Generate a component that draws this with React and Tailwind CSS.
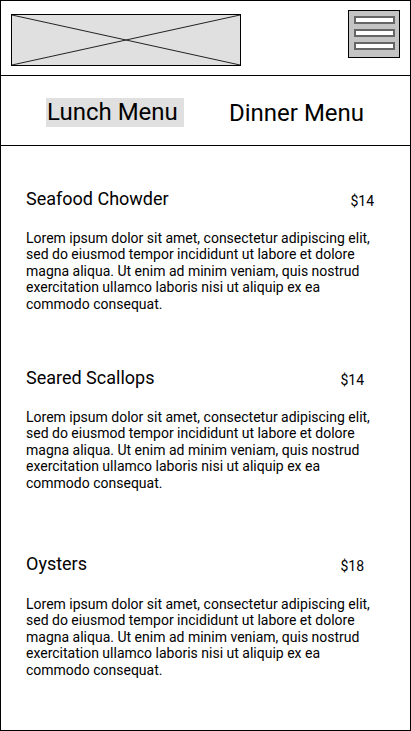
import React from 'react';

const lorem =
  'Lorem ipsum dolor sit amet, consectetur adipiscing elit, sed do eiusmod tempor incididunt ut labore et dolore magna aliqua. Ut enim ad minim veniam, quis nostrud exercitation ullamco laboris nisi ut aliquip ex ea commodo consequat.';

const items = [
  { name: 'Seafood Chowder', price: '$14', top: 'mt-[41px]', gap: 'mt-[19px]', pr: 'pr-[36px]' },
  { name: 'Seared Scallops', price: '$14', top: 'mt-[54px]', gap: 'mt-[19px]', pr: 'pr-[46px]' },
  { name: 'Oysters', price: '$18', top: 'mt-[61px]', gap: 'mt-[20px]', pr: 'pr-[46px]' },
];

const LogoPlaceholder = () => (
  <div className="w-[230px] h-[52px] border border-black bg-[#e0e0e0]">
    <svg width="228" height="50" viewBox="0 0 228 50" className="block">
      <line x1="0" y1="0" x2="228" y2="50" stroke="#222" strokeWidth="1" />
      <line x1="0" y1="50" x2="228" y2="0" stroke="#222" strokeWidth="1" />
    </svg>
  </div>
);

const MenuButton = () => (
  <div className="w-[52px] h-[48px] border border-black bg-[#c4c4c4] flex flex-col items-center pt-[5px] gap-[5px]">
    <div className="w-[41px] h-[8px] border-2 border-[#666] bg-white" />
    <div className="w-[41px] h-[8px] border-2 border-[#666] bg-white" />
    <div className="w-[41px] h-[8px] border-2 border-[#666] bg-white" />
  </div>
);

const MenuItem = ({ item }) => (
  <div className={item.top}>
    <div className={`flex items-center justify-between h-[24px] ${item.pr}`}>
      <h2 className="text-[18px] leading-[24px] font-normal">{item.name}</h2>
      <span className="text-[14px] leading-[24px] pt-[3px]">{item.price}</span>
    </div>
    <p className={`${item.gap} text-[14px] leading-[16.4px] pr-[30px]`}>{lorem}</p>
  </div>
);

export default function App() {
  return (
    <div
      className="w-[411px] h-[731px] border border-black bg-white text-black overflow-hidden"
      style={{ fontFamily: 'Roboto, "Liberation Sans", sans-serif' }}
    >
      <header className="h-[75px] border-b border-black flex items-start justify-between pl-[10px] pr-[10px]">
        <div className="mt-[13px]">
          <LogoPlaceholder />
        </div>
        <div className="mt-[9px]">
          <MenuButton />
        </div>
      </header>

      <nav className="h-[70px] border-b border-black flex items-start pt-[22px] pl-[45px]">
        <div className="w-[138px] h-[29px] bg-[#e0e0e0] pl-[1px] text-[24px] leading-[29px]">
          Lunch Menu
        </div>
        <div className="ml-[45px] text-[24px] leading-[29px] pt-[1px]">Dinner Menu</div>
      </nav>

      <main className="pl-[25px]">
        {items.map((item) => (
          <MenuItem key={item.name} item={item} />
        ))}
      </main>
    </div>
  );
}
